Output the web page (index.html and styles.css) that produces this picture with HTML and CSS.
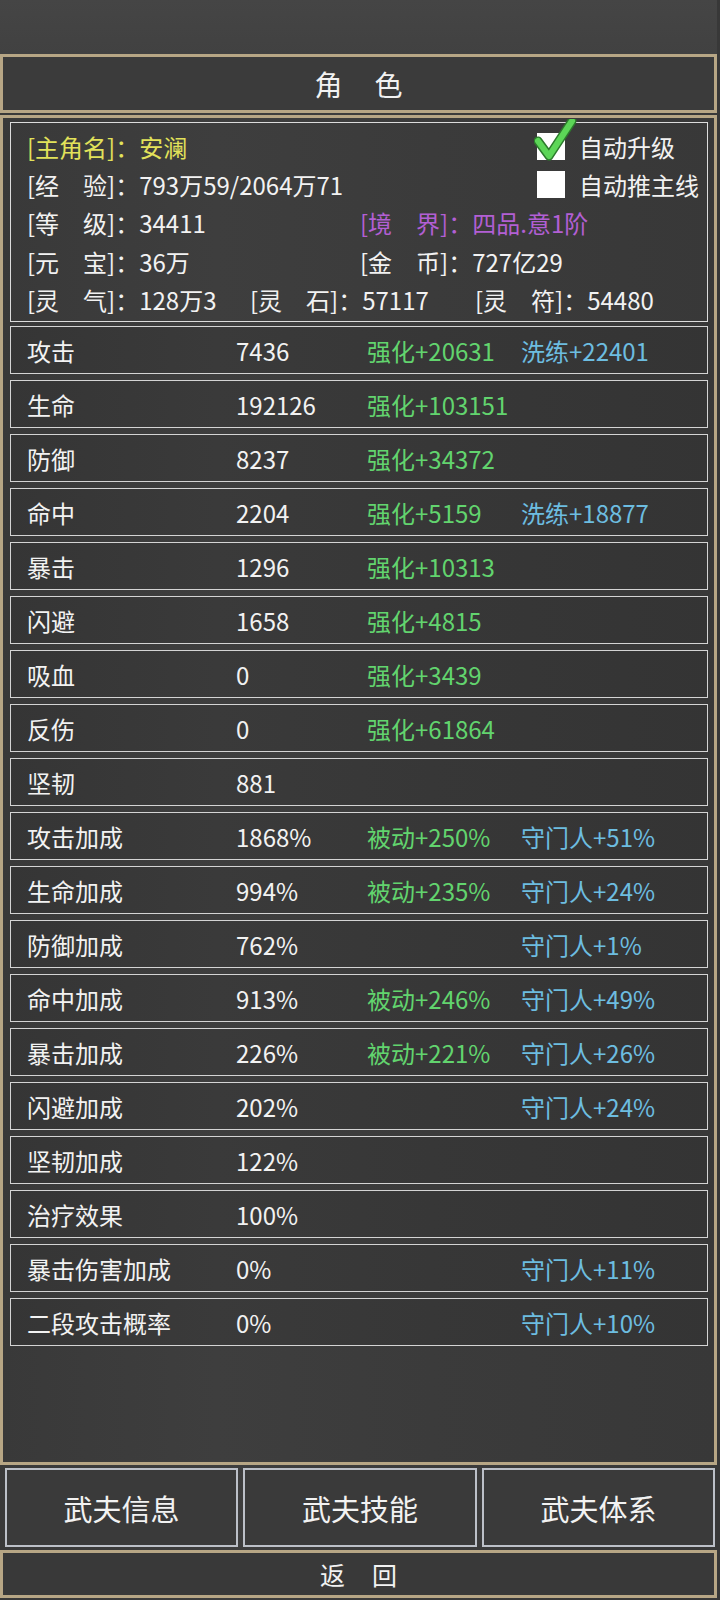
FILE: index.html
```html
<!DOCTYPE html>
<html lang="zh">
<head>
<meta charset="utf-8">
<title>角色</title>
<link rel="stylesheet" href="styles.css">
</head>
<body>
<div class="screen">
  <div class="status"></div>
  <div class="titlebar"><span class="title">角　色</span></div>
  <div class="panel">
    <div class="info">
      <div class="line two-check">
        <span class="yellow">[主角名]：安澜</span>
        <span class="check">
          <span class="box">
            <svg class="tick" width="44" height="44" viewBox="0 0 44 44">
              <path d="M4 22 L15 37 L38 2" fill="none" stroke="#2c7a2c" stroke-width="9" stroke-linecap="round" stroke-linejoin="round"/>
              <path d="M4 22 L15 37 L38 2" fill="none" stroke="#5cd657" stroke-width="6" stroke-linecap="round" stroke-linejoin="round"/>
            </svg>
          </span>
          <span>自动升级</span>
        </span>
      </div>
      <div class="line two-check">
        <span>[经　验]：793万59/2064万71</span>
        <span class="check"><span class="box"></span><span>自动推主线</span></span>
      </div>
      <div class="line two-col">
        <span>[等　级]：34411</span>
        <span class="purple">[境　界]：四品.意1阶</span>
      </div>
      <div class="line two-col">
        <span>[元　宝]：36万</span>
        <span>[金　币]：727亿29</span>
      </div>
      <div class="line three-col">
        <span>[灵　气]：128万3</span>
        <span>[灵　石]：57117</span>
        <span>[灵　符]：54480</span>
      </div>
    </div>
    <div class="rows">
      <div class="row"><span>攻击</span><span>7436</span><span class="green">强化+20631</span><span class="blue">洗练+22401</span></div>
      <div class="row"><span>生命</span><span>192126</span><span class="green">强化+103151</span><span></span></div>
      <div class="row"><span>防御</span><span>8237</span><span class="green">强化+34372</span><span></span></div>
      <div class="row"><span>命中</span><span>2204</span><span class="green">强化+5159</span><span class="blue">洗练+18877</span></div>
      <div class="row"><span>暴击</span><span>1296</span><span class="green">强化+10313</span><span></span></div>
      <div class="row"><span>闪避</span><span>1658</span><span class="green">强化+4815</span><span></span></div>
      <div class="row"><span>吸血</span><span>0</span><span class="green">强化+3439</span><span></span></div>
      <div class="row"><span>反伤</span><span>0</span><span class="green">强化+61864</span><span></span></div>
      <div class="row"><span>坚韧</span><span>881</span><span></span><span></span></div>
      <div class="row"><span>攻击加成</span><span>1868%</span><span class="green">被动+250%</span><span class="blue">守门人+51%</span></div>
      <div class="row"><span>生命加成</span><span>994%</span><span class="green">被动+235%</span><span class="blue">守门人+24%</span></div>
      <div class="row"><span>防御加成</span><span>762%</span><span></span><span class="blue">守门人+1%</span></div>
      <div class="row"><span>命中加成</span><span>913%</span><span class="green">被动+246%</span><span class="blue">守门人+49%</span></div>
      <div class="row"><span>暴击加成</span><span>226%</span><span class="green">被动+221%</span><span class="blue">守门人+26%</span></div>
      <div class="row"><span>闪避加成</span><span>202%</span><span></span><span class="blue">守门人+24%</span></div>
      <div class="row"><span>坚韧加成</span><span>122%</span><span></span><span></span></div>
      <div class="row"><span>治疗效果</span><span>100%</span><span></span><span></span></div>
      <div class="row"><span>暴击伤害加成</span><span>0%</span><span></span><span class="blue">守门人+11%</span></div>
      <div class="row"><span>二段攻击概率</span><span>0%</span><span></span><span class="blue">守门人+10%</span></div>
    </div>
  </div>
  <div class="buttons">
    <div class="btn">武夫信息</div>
    <div class="btn">武夫技能</div>
    <div class="btn">武夫体系</div>
  </div>
  <div class="backbar"><span class="back">返　回</span></div>
</div>
</body>
</html>
```
FILE: styles.css
```css
html, body {
  margin: 0;
  padding: 0;
}
body {
  width: 720px;
  height: 1600px;
  background: linear-gradient(90deg, #393939 0%, #3e3e3e 30%, #3b3b3b 60%, #383838 100%);
  font-family: "Noto Sans CJK SC", "Noto Sans", sans-serif;
  color: #f2f2f2;
  overflow: hidden;
}
.screen {
  display: flex;
  flex-direction: column;
  width: 717px;
}
.status {
  height: 54px;
  background: linear-gradient(180deg, #454545 0%, #414141 100%);
}
.titlebar {
  box-sizing: border-box;
  height: 59px;
  border: 3px solid #b7a685;
  background: #3b3b3b;
  display: flex;
  align-items: center;
  justify-content: center;
}
.title {
  font-size: 28px;
  font-weight: 400;
  letter-spacing: 2px;
  padding-left: 2px;
}
.panel {
  box-sizing: border-box;
  margin-top: 2px;
  height: 1350px;
  border: 3px solid #b7a685;
  padding: 4px 6px 0 7px;
  display: flex;
  flex-direction: column;
  gap: 4px;
}
.info {
  box-sizing: border-box;
  height: 200px;
  border: 1px solid #dcdcdc;
  padding: 4px 0 0 16px;
  font-size: 24px;
}
.line {
  height: 38.4px;
  display: grid;
  align-items: center;
  white-space: nowrap;
}
.two-check {
  grid-template-columns: 510px 1fr;
}
.two-col {
  grid-template-columns: 333px 1fr;
}
.three-col {
  grid-template-columns: 223px 225px 1fr;
}
.yellow { color: #e2e25a; }
.purple { color: #b25fd4; }
.green { color: #62d46e; }
.blue { color: #6dbde0; }
.check {
  display: flex;
  align-items: center;
  gap: 14px;
}
.box {
  position: relative;
  width: 28px;
  height: 27px;
  background: #ffffff;
  flex: none;
}
.tick {
  position: absolute;
  left: -3px;
  top: -14px;
}
.rows {
  display: flex;
  flex-direction: column;
  gap: 6px;
}
.row {
  box-sizing: border-box;
  height: 48px;
  border: 1px solid #d4d4d4;
  background: rgba(0, 0, 0, 0.06);
  padding-left: 16px;
  display: grid;
  grid-template-columns: 209px 131px 154px 1fr;
  align-items: center;
  font-size: 24px;
  white-space: nowrap;
}
.buttons {
  margin-top: 3px;
  padding-left: 5px;
  display: grid;
  grid-template-columns: 233px 234px 233px;
  gap: 5px;
}
.btn {
  box-sizing: border-box;
  height: 79px;
  border: 2px solid #bcc0c8;
  background: #3a3a3a;
  display: flex;
  align-items: center;
  justify-content: center;
  font-size: 29px;
  font-weight: 400;
}
.backbar {
  box-sizing: border-box;
  margin-top: 3px;
  height: 48px;
  border: 3px solid #b7a685;
  background: #393939;
  display: flex;
  align-items: center;
  justify-content: center;
}
.back {
  font-size: 25px;
  font-weight: 400;
  letter-spacing: 1px;
  padding-left: 1px;
}
```
